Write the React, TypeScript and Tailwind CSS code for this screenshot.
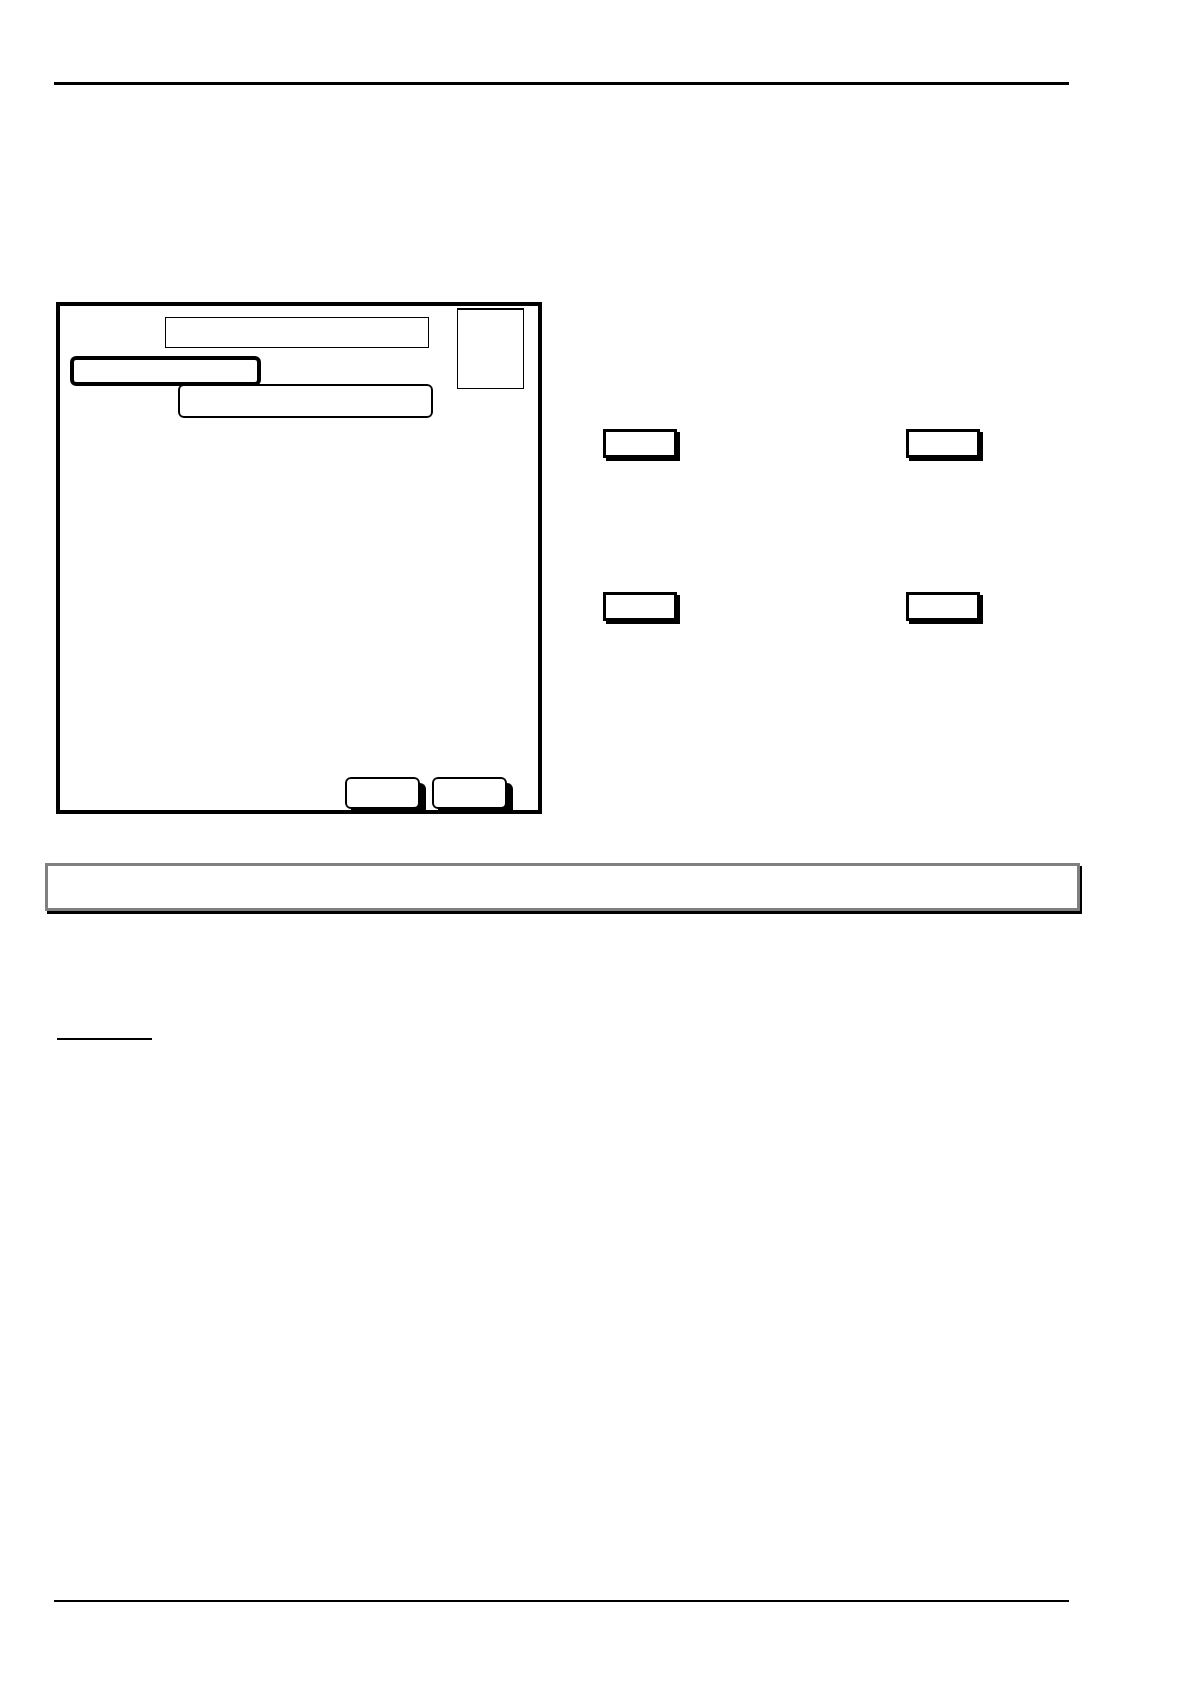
const actionRows = [
  ["Action 1", "Action 2"],
  ["Action 3", "Action 4"],
];

const panelActions = ["Confirm", "Cancel"];

function FormPanel() {
  return (
    <section className="flex h-[512px] w-[486px] shrink-0 flex-col overflow-hidden border-4 border-black">
      <div className="flex items-start gap-6 pr-3.5 pl-2.5">
        <div className="flex min-w-0 flex-1 flex-col pt-[11px]">
          <div className="mr-1 h-[31px] w-[264px] self-end border border-black" />
          <input
            type="text"
            aria-label="Name"
            className="relative z-10 mt-2 h-[30px] w-[191px] rounded-md border-4 border-black bg-white px-2 text-sm"
          />
          <input
            type="text"
            aria-label="Details"
            className="-mt-0.5 h-[34px] w-[255px] self-end rounded-md border-2 border-black bg-white px-2 text-sm"
          />
        </div>
        <div className="mt-0.5 h-[81px] w-[67px] border border-t-2 border-black" />
      </div>

      <div className="mt-auto flex justify-end gap-3 pr-[31px] pb-px">
        {panelActions.map((label) => (
          <button
            key={label}
            type="button"
            aria-label={label}
            className="h-8 w-[75px] rounded-md border-2 border-black bg-white shadow-[6px_6px_0_0_#000]"
          />
        ))}
      </div>
    </section>
  );
}

function ActionGrid() {
  return (
    <div className="flex flex-1 flex-col gap-[134px] pt-[127px] pr-[89px] pl-[61px]">
      {actionRows.map((row) => (
        <div key={row[0]} className="flex justify-between">
          {row.map((label) => (
            <button
              key={label}
              type="button"
              aria-label={label}
              className="h-[29px] w-[74px] border-3 border-black bg-white shadow-[3px_3px_0_0_#000]"
            />
          ))}
        </div>
      ))}
    </div>
  );
}

export default function App() {
  return (
    <div className="flex min-h-screen flex-col bg-white pt-[82px] pr-[121px] pb-[82px] pl-[54px] font-['Liberation_Sans',sans-serif] text-black">
      <header className="border-t-3 border-black" />

      <main className="pt-[217px]">
        <div className="flex pl-0.5">
          <FormPanel />
          <ActionGrid />
        </div>

        <div className="mt-[49px] -mr-[11px] -ml-[9px] h-12 border-3 border-[#808080] bg-white shadow-[2px_3px_0_0_#000]" />

        <hr className="mt-[127px] ml-[3px] w-[95px] border-t-2 border-black" />
      </main>

      <footer className="mt-auto border-t-2 border-black" />
    </div>
  );
}
